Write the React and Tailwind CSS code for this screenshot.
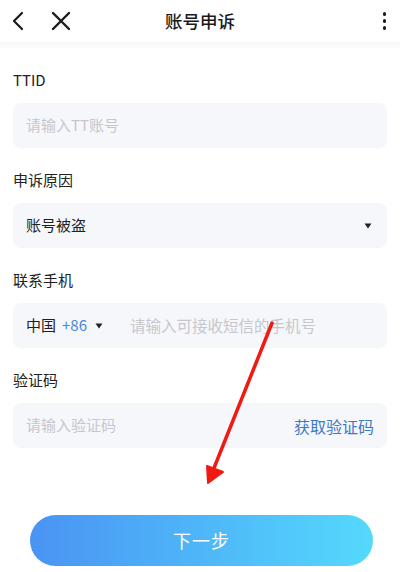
import { useState } from 'react';

const font = { fontFamily: '"Noto Sans CJK SC", "Noto Sans", sans-serif' };

function Field({ label, children, first }) {
  return (
    <div className={first ? 'mt-[27px]' : 'mt-[21px]'}>
      <div className="h-[22px] text-[15px] leading-[22px] text-[#222]">{label}</div>
      <div className="mt-[12px] flex h-[45px] items-center rounded-[8px] bg-[#f6f7fb] px-[13px] text-[15px]">
        {children}
      </div>
    </div>
  );
}

function Caret() {
  return (
    <svg width="8" height="6" viewBox="0 0 8 6" className="shrink-0">
      <path d="M0.5 0.5 H7.5 L4 5.5 Z" fill="#222" />
    </svg>
  );
}

export default function App() {
  const [ttid, setTtid] = useState('');
  const [phone, setPhone] = useState('');
  const [code, setCode] = useState('');

  return (
    <div className="relative h-[572px] w-[400px] overflow-hidden bg-white" style={font}>
      {/* 顶部导航 */}
      <header className="grid h-[42px] grid-cols-[1fr_auto_1fr] items-center px-[10px]">
        <div className="flex items-center">
          <svg width="14" height="20" viewBox="0 0 14 20" className="ml-[1px]">
            <path d="M11 2 L3 10 L11 18" fill="none" stroke="#1a1a1a" strokeWidth="2.2" strokeLinecap="round" strokeLinejoin="round" />
          </svg>
          <svg width="20" height="20" viewBox="0 0 20 20" className="ml-[26px]">
            <path d="M2 2 L18 18 M18 2 L2 18" fill="none" stroke="#1a1a1a" strokeWidth="2.4" strokeLinecap="round" />
          </svg>
        </div>
        <h1 className="text-center text-[17.5px] font-medium text-[#1a1a1a]">账号申诉</h1>
        <div className="mr-[4px] flex flex-col items-end gap-[3.5px] justify-self-end">
          <span className="h-[3.5px] w-[3.5px] rounded-full bg-[#1a1a1a]" />
          <span className="h-[3.5px] w-[3.5px] rounded-full bg-[#1a1a1a]" />
          <span className="h-[3.5px] w-[3.5px] rounded-full bg-[#1a1a1a]" />
        </div>
      </header>
      <div className="h-[8px] bg-gradient-to-b from-[#f7f7f7] to-white" />

      <main className="-mt-[8px] px-[13px]">
        <Field label="TTID" first>
          <input
            value={ttid}
            onChange={(e) => setTtid(e.target.value)}
            placeholder="请输入TT账号"
            className="w-full bg-transparent text-[#222] outline-none placeholder:text-[#c5c7cd]"
          />
        </Field>

        <Field label="申诉原因">
          <span className="flex-1 text-[#1f1f1f]">账号被盗</span>
          <span className="mr-[2px]"><Caret /></span>
        </Field>

        <Field label="联系手机">
          <span className="shrink-0 whitespace-nowrap text-[#1f1f1f]">中国</span>
          <span className="ml-[6px] shrink-0 text-[#4a86d8]">+86</span>
          <span className="ml-[8px] shrink-0"><Caret /></span>
          <input
            value={phone}
            onChange={(e) => setPhone(e.target.value)}
            placeholder="请输入可接收短信的手机号"
            className="ml-[27px] min-w-0 flex-1 bg-transparent text-[15.5px] text-[#222] outline-none placeholder:text-[#c5c7cd]"
          />
        </Field>

        <Field label="验证码">
          <input
            value={code}
            onChange={(e) => setCode(e.target.value)}
            placeholder="请输入验证码"
            className="min-w-0 flex-1 bg-transparent text-[#222] outline-none placeholder:text-[#c5c7cd]"
          />
          <span className="shrink-0 text-[16px] text-[#3d79c9]">获取验证码</span>
        </Field>
      </main>

      <div className="ml-[30px] mt-[67px] w-[343px]">
        <button className="h-[51px] w-full rounded-full bg-gradient-to-r from-[#4a93f3] to-[#55d9fc] text-[18px] tracking-[1px] text-white">
          下一步
        </button>
      </div>

      {/* 红色指示箭头 */}
      <svg className="pointer-events-none absolute left-0 top-0" width="400" height="572" viewBox="0 0 400 572">
        <path d="M272 323 L214 468" stroke="#f01a12" strokeWidth="3.5" strokeLinecap="round" />
        <path d="M207 466 L208 483 L223 472 Z" fill="#f01a12" stroke="#f01a12" strokeWidth="2" strokeLinejoin="round" />
      </svg>
    </div>
  );
}
